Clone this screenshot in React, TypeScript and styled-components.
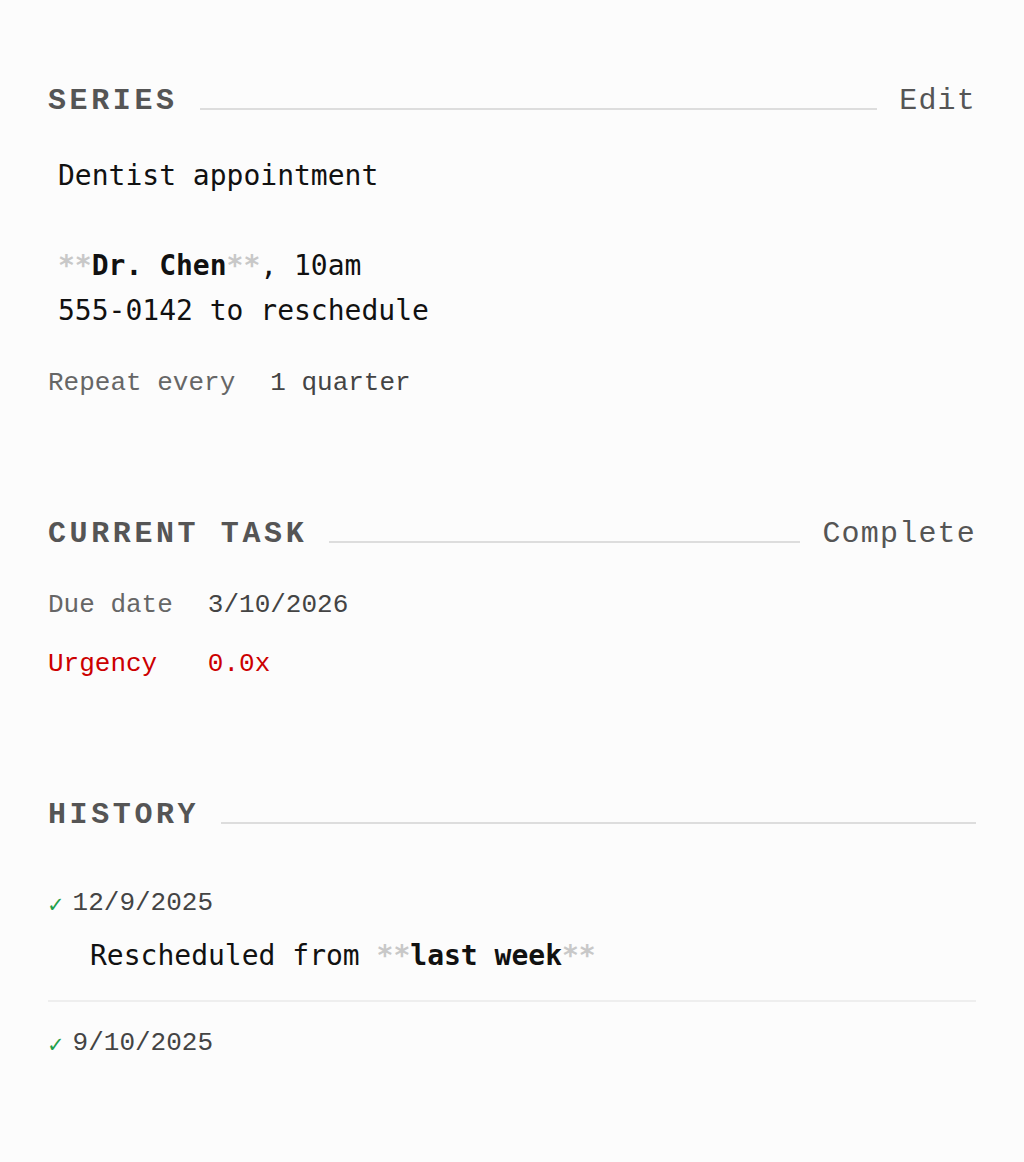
import styled, { createGlobalStyle } from "styled-components";

const GlobalStyle = createGlobalStyle`
  html, body {
    margin: 0;
    padding: 0;
    background: #fcfcfc;
  }
  * {
    box-sizing: border-box;
  }
`;

const LABEL_FONT = `"Liberation Mono", "DejaVu Sans Mono", monospace`;
const BODY_FONT = `"DejaVu Sans Mono", "Liberation Mono", monospace`;

type Segment = { text: string; bold?: boolean };

const seriesLines: Segment[][] = [
  [{ text: "Dentist appointment" }],
  [],
  [{ text: "Dr. Chen", bold: true }, { text: ", 10am" }],
  [{ text: "555-0142 to reschedule" }],
];

const history = [
  {
    date: "12/9/2025",
    note: [{ text: "Rescheduled from " }, { text: "last week", bold: true }],
  },
  { date: "9/10/2025", note: null },
];

function RichLine({ segments }: { segments: Segment[] }) {
  if (segments.length === 0) return <Line>{"\u00a0"}</Line>;
  return (
    <Line>
      {segments.map((seg, i) =>
        seg.bold ? (
          <Strong key={i}>
            <Marker>**</Marker>
            {seg.text}
            <Marker>**</Marker>
          </Strong>
        ) : (
          <span key={i}>{seg.text}</span>
        )
      )}
    </Line>
  );
}

function SectionHeader({ title, action }: { title: string; action?: string }) {
  return (
    <Header>
      <Title>{title}</Title>
      <Rule $end={!action} />
      {action && <Action>{action}</Action>}
    </Header>
  );
}

export default function App() {
  return (
    <>
      <GlobalStyle />
      <Page>
        <Section>
          <SectionHeader title="SERIES" action="Edit" />
          <Body>
            {seriesLines.map((line, i) => (
              <RichLine key={i} segments={line} />
            ))}
          </Body>
          <Fields $top={32}>
            <Label>Repeat every</Label>
            <Value>1 quarter</Value>
          </Fields>
        </Section>

        <Section>
          <SectionHeader title="CURRENT TASK" action="Complete" />
          <Fields $top={1}>
            <Label>Due date</Label>
            <Value>3/10/2026</Value>
            <Label $alert>Urgency</Label>
            <Value $alert>0.0x</Value>
          </Fields>
        </Section>

        <Section>
          <SectionHeader title="HISTORY" />
          <HistoryList>
            {history.map((entry) => (
              <Entry key={entry.date}>
                <EntryDate>
                  <Check>✓</Check>
                  {entry.date}
                </EntryDate>
                {entry.note && (
                  <Note>
                    <RichLine segments={entry.note} />
                  </Note>
                )}
              </Entry>
            ))}
          </HistoryList>
        </Section>
      </Page>
    </>
  );
}

const Page = styled.div`
  width: 1024px;
  min-height: 1162px;
  padding: 81px 48px 40px;
  display: flex;
  flex-direction: column;
  gap: 113px;
`;

const Section = styled.section`
  display: flex;
  flex-direction: column;
`;

const Header = styled.div`
  display: flex;
  align-items: center;
  height: 36px;
  margin-bottom: 36px;
`;

const Title = styled.h2`
  margin: 4px 0 0;
  font-family: ${LABEL_FONT};
  font-size: 30px;
  line-height: 36px;
  font-weight: 700;
  letter-spacing: 3.6px;
  color: #555;
`;

const Rule = styled.div<{ $end?: boolean }>`
  flex: 1;
  height: 2px;
  background: #dddddd;
  margin: 20px ${(p) => (p.$end ? "0" : "22px")} 0 22px;
`;

const Action = styled.button`
  border: none;
  background: none;
  margin: 4px 0 0;
  padding: 0;
  font-family: ${LABEL_FONT};
  font-size: 30px;
  line-height: 36px;
  letter-spacing: 1.2px;
  color: #555;
  cursor: pointer;
`;

const Body = styled.div`
  padding-left: 10px;
  font-family: ${BODY_FONT};
  font-size: 28px;
  line-height: 45px;
  color: #111;
`;

const Line = styled.div`
  white-space: pre;
`;

const Marker = styled.span`
  color: #c8c8c8;
`;

const Strong = styled.strong`
  font-weight: 700;
`;

const Fields = styled.div<{ $top: number }>`
  display: grid;
  grid-template-columns: max-content max-content;
  column-gap: 35px;
  row-gap: 23px;
  margin-top: ${(p) => p.$top}px;
`;

const Label = styled.span<{ $alert?: boolean }>`
  font-family: ${LABEL_FONT};
  font-size: 26px;
  line-height: 36px;
  color: ${(p) => (p.$alert ? "#cc0000" : "#666")};
`;

const Value = styled(Label)`
  color: ${(p) => (p.$alert ? "#cc0000" : "#444")};
`;

const HistoryList = styled.div`
  margin-top: -6px;
  display: flex;
  flex-direction: column;
`;

const Entry = styled.div`
  padding: 22px 0;
  & + & {
    border-top: 2px solid #eeeeee;
  }
  & + & > div:first-child {
    margin-top: -1px;
  }
`;

const EntryDate = styled.div`
  display: flex;
  align-items: center;
  font-family: ${LABEL_FONT};
  font-size: 26px;
  line-height: 36px;
  color: #444;
`;

const Check = styled.span`
  font-family: "DejaVu Sans", sans-serif;
  font-size: 21px;
  color: #22a04b;
  margin-left: -1px;
  margin-right: 8px;
  padding-top: 4px;
`;

const Note = styled.div`
  margin-top: 10px;
  padding-left: 42px;
  font-family: ${BODY_FONT};
  font-size: 28px;
  line-height: 45px;
  color: #111;
`;
